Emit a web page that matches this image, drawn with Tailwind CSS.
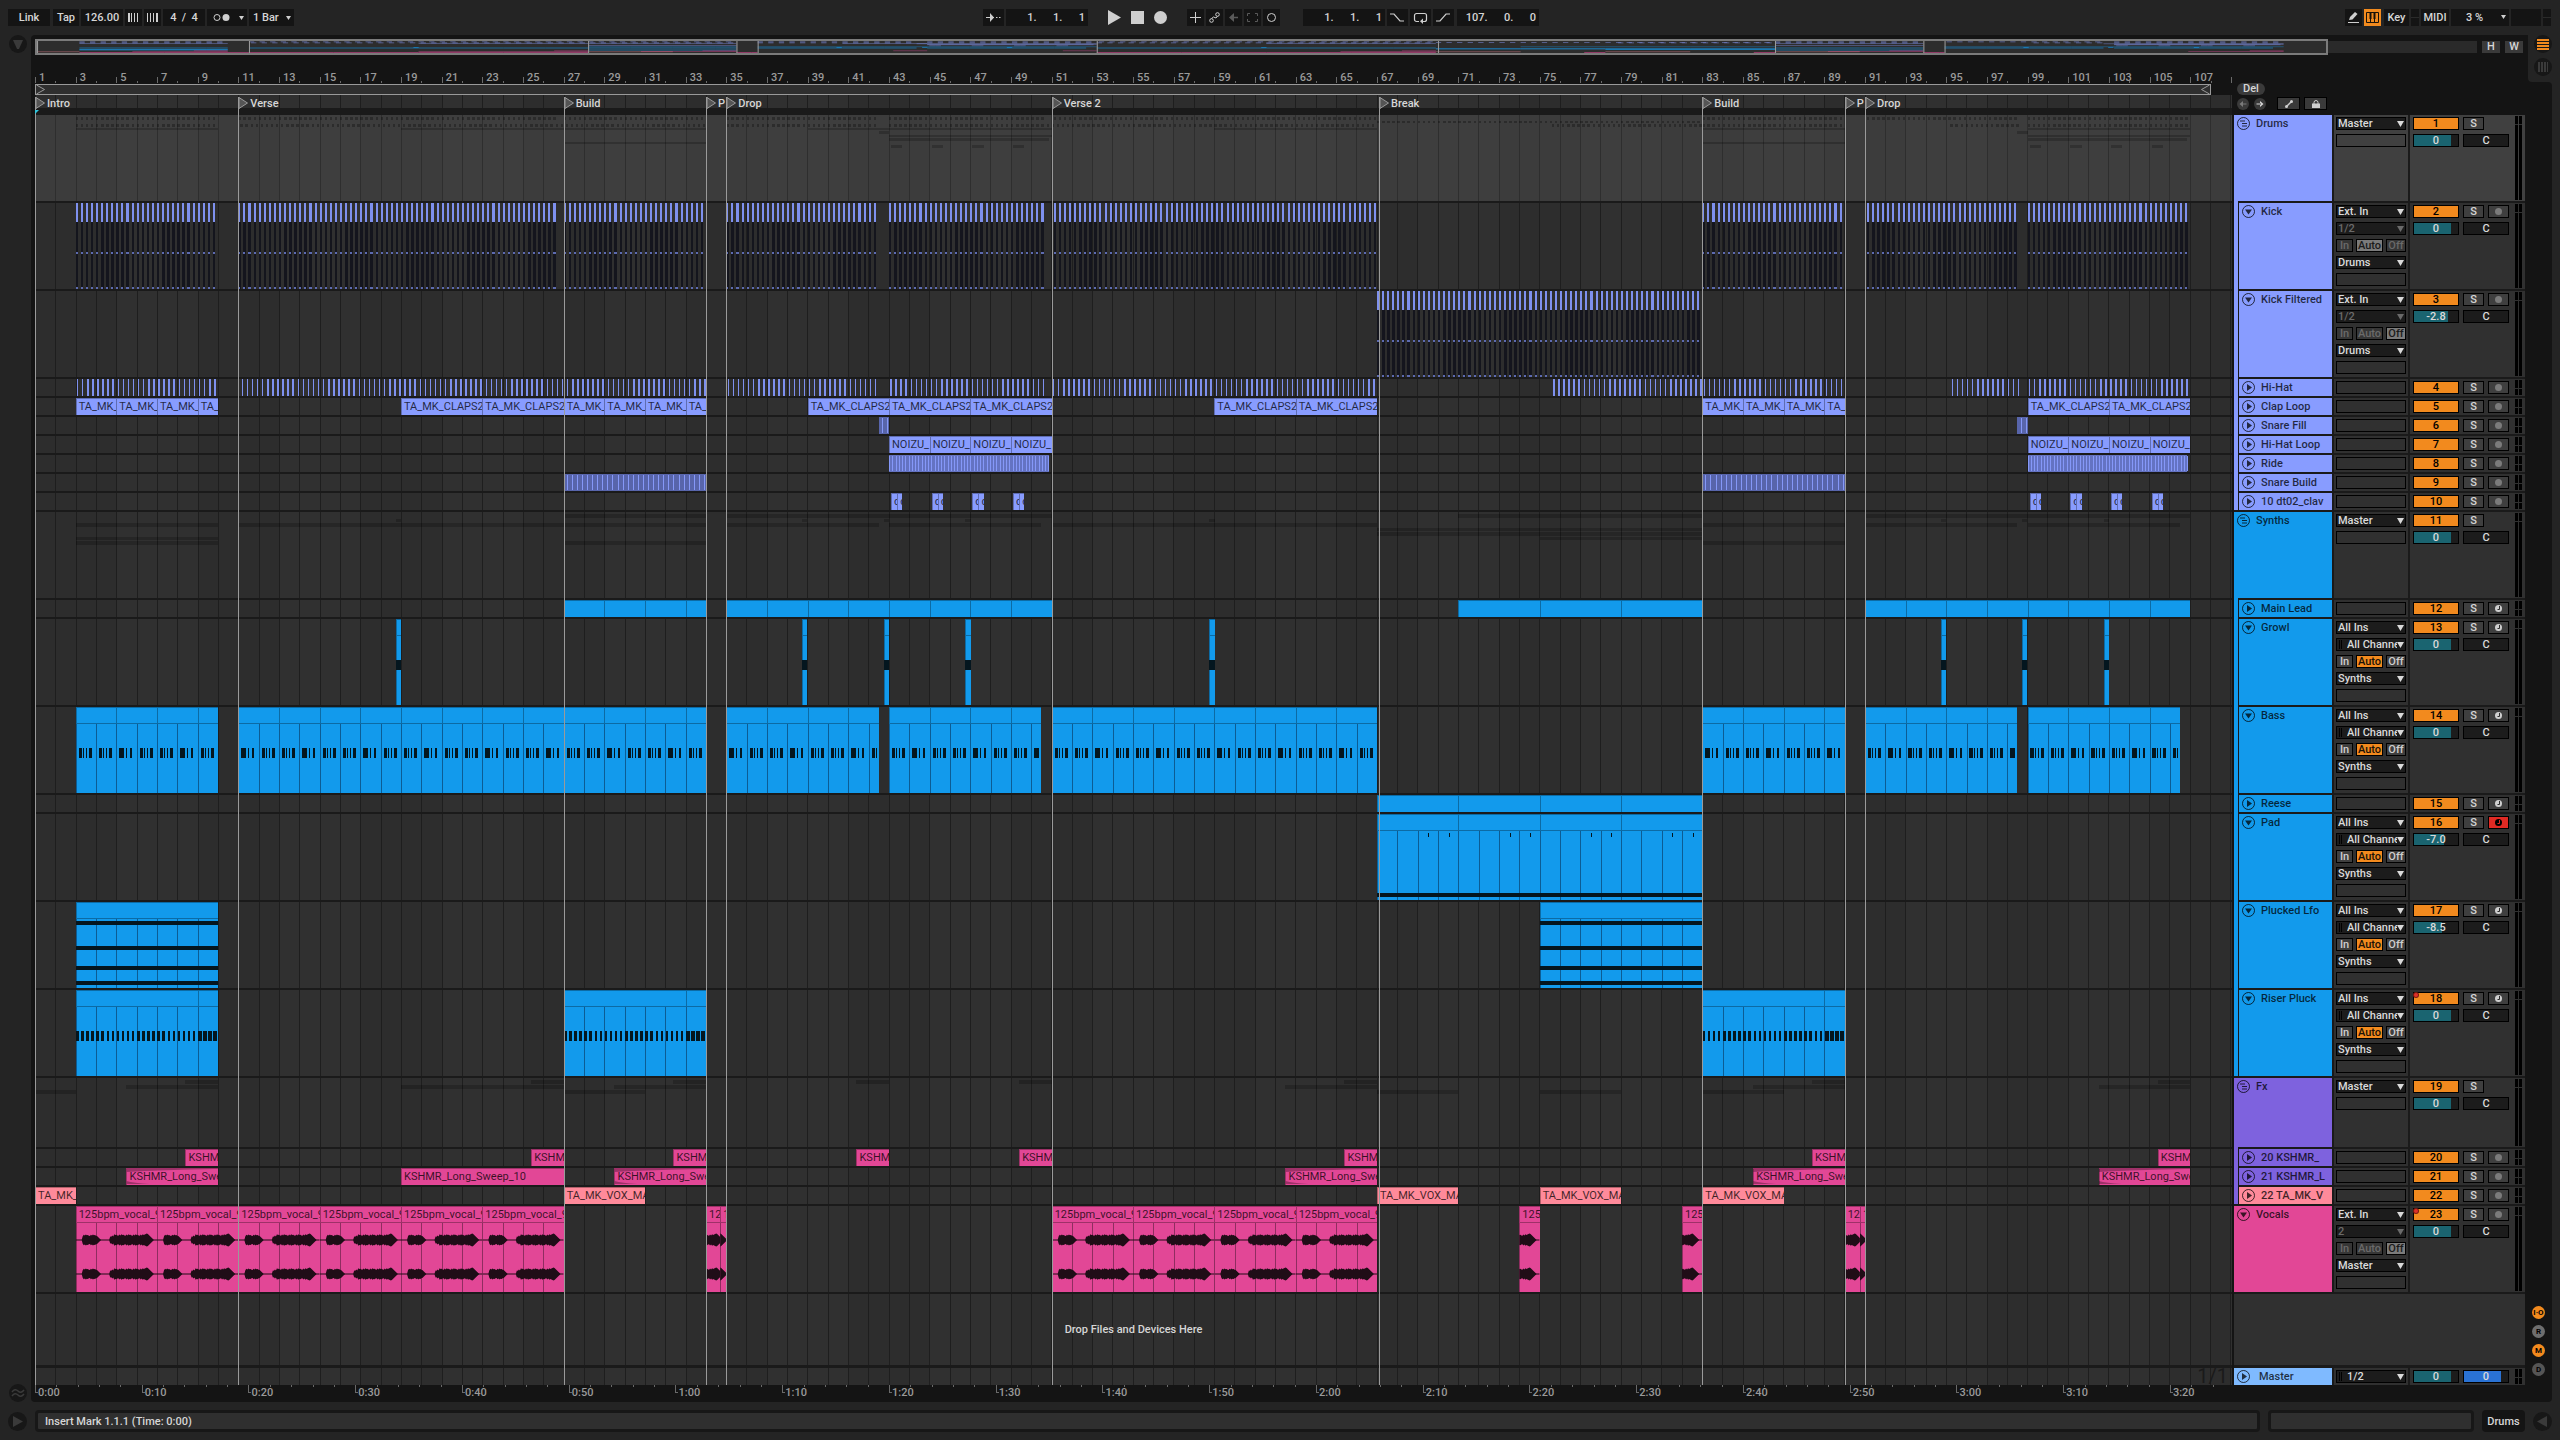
<!DOCTYPE html>
<html lang="en">
<head>
    <meta charset="UTF-8">
    <meta name="viewport" content="width=device-width, initial-scale=1.0">
    <title>Arrangement</title>
    <script src="https://cdn.jsdelivr.net/npm/@tailwindcss/browser@4"></script>
</head>
<body class="flex min-h-screen flex-col bg-[#242424] font-['Roboto','Liberation_Sans',sans-serif] text-[11px] leading-[13px] font-medium text-[#d6d6d6]">

    <!-- Transport -->
    <header class="flex h-[35px] items-center pr-[9px] pl-2">
        <div class="flex w-[38.34%] gap-[2px]">
            <button class="h-[17px] w-[42px] bg-[#141414]">Link</button>
            <button class="ml-px h-[17px] w-[26px] bg-[#141414]">Tap</button>
            <input aria-label="Tempo" value="126.00" class="h-[17px] w-[42px] bg-[#141414] text-center">
            <button aria-label="Nudge down" class="flex h-[17px] w-[17px] items-center justify-center bg-[#141414]">
                <svg width="13" height="9" fill="#cfcfcf" shape-rendering="crispEdges"><path d="M1 0h2v9H1zM4 0h1v9H4zM7 0h1v9H7zM10 0h1v9h-1z"/></svg>
            </button>
            <button aria-label="Nudge up" class="flex h-[17px] w-[17px] items-center justify-center bg-[#141414]">
                <svg width="13" height="9" fill="#cfcfcf" shape-rendering="crispEdges"><path d="M1 0h1v9H1zM4 0h1v9H4zM7 0h1v9H7zM10 0h2v9h-2z"/></svg>
            </button>
            <input aria-label="Time signature" value="4  /  4" class="h-[17px] w-[42px] bg-[#141414] text-center">
            <button aria-label="Metronome" class="flex h-[17px] w-[40px] items-center justify-between bg-[#141414] pr-[3px] pl-[6px]">
                <svg width="18" height="9"><circle cx="4" cy="4.5" r="3" fill="none" stroke="#cfcfcf"/><circle cx="13" cy="4.5" r="3.5" fill="#cfcfcf"/></svg>
                <svg width="5" height="4" fill="#cfcfcf"><path d="M0 0h5L2.5 4z"/></svg>
            </button>
            <div class="relative h-[17px] w-[45px] bg-[#141414]">
                <select aria-label="Quantization" class="h-full w-full appearance-none pl-1"><option>1 Bar</option></select>
                <svg class="pointer-events-none absolute top-[7px] right-[3px]" width="5" height="4" fill="#cfcfcf"><path d="M0 0h5L2.5 4z"/></svg>
            </div>
        </div>
        <div class="flex flex-1 gap-[2px]">
            <button aria-label="Follow" class="flex h-[17px] w-[21px] items-center justify-center bg-[#141414]">
                <svg width="15" height="9"><path d="M0 4.5h8M10 4.5h1.5M13 4.5h1.5" stroke="#cfcfcf"/><path d="M4 0l4 4.5L4 9z" fill="#cfcfcf"/></svg>
            </button>
            <input aria-label="Position" value="1.      1.      1" class="mr-[16px] h-[17px] w-[82px] bg-[#141414] pr-[3px] text-right">
            <button aria-label="Play" class="h-[17px] w-[17px]"><svg width="17" height="17" fill="#cfcfcf"><path d="M2 1l13 7.5L2 16z"/></svg></button>
            <button aria-label="Stop" class="ml-1 h-[17px] w-[17px]"><svg width="17" height="17" fill="#cfcfcf"><path d="M2 2h13v13H2z"/></svg></button>
            <button aria-label="Record" class="ml-1 h-[17px] w-[17px]"><svg width="17" height="17" fill="#cfcfcf"><circle cx="8.5" cy="8.5" r="6.5"/></svg></button>
            <button aria-label="Overdub" class="ml-[16px] flex h-[17px] w-[17px] items-center justify-center bg-[#141414]"><svg width="11" height="11" stroke="#cfcfcf" fill="none"><path d="M5.5 0v11M0 5.5h11"/></svg></button>
            <button aria-label="Automation arm" class="flex h-[17px] w-[17px] items-center justify-center bg-[#141414]"><svg width="11" height="11" stroke="#cfcfcf" fill="none"><circle cx="2.5" cy="8.5" r="1.8"/><circle cx="8.5" cy="2.5" r="1.8"/><path d="M2.500 6.5L4.5 5l2.5 1 1.5-1.8"/></svg></button>
            <button aria-label="Re-enable automation" class="flex h-[17px] w-[17px] items-center justify-center bg-[#141414]"><svg width="11" height="9"><path d="M10 4.5H3" stroke="#5a5a5a" stroke-width="1.5"/><path d="M6 0v9L1 4.5z" fill="#5a5a5a"/></svg></button>
            <button aria-label="Capture MIDI" class="flex h-[17px] w-[17px] items-center justify-center bg-[#141414]"><svg width="11" height="9" stroke="#5a5a5a" fill="none"><path d="M.5 3V.5H3M8 .5h2.5V3M10.5 6v2.5H8M3 8.5H.5V6"/></svg></button>
            <button aria-label="Session record" class="flex h-[17px] w-[17px] items-center justify-center bg-[#141414]"><svg width="11" height="11" stroke="#cfcfcf" fill="none"><circle cx="5.5" cy="5.5" r="4"/></svg></button>
            <input aria-label="Loop start" value="1.      1.      1" class="ml-[21px] h-[17px] w-[82px] bg-[#141414] pr-[3px] text-right">
            <button aria-label="Punch in" class="flex h-[17px] w-[21px] items-center justify-center bg-[#141414]"><svg width="15" height="9" stroke="#cfcfcf" fill="none" stroke-width="1.2"><path d="M0 1h4l6 7h4"/></svg></button>
            <button aria-label="Loop" class="flex h-[17px] w-[21px] items-center justify-center bg-[#141414]"><svg width="15" height="12"><path d="M6 9.5H3.5a2 2 0 0 1-2-2v-4a2 2 0 0 1 2-2h8a2 2 0 0 1 2 2v4a2 2 0 0 1-2 2H9" stroke="#cfcfcf" fill="none" stroke-width="1.2"/><path d="M10 6.5V12L7 9.3z" fill="#cfcfcf"/></svg></button>
            <button aria-label="Punch out" class="flex h-[17px] w-[21px] items-center justify-center bg-[#141414]"><svg width="15" height="9" stroke="#cfcfcf" fill="none" stroke-width="1.2"><path d="M0 8h4l6-7h4"/></svg></button>
            <input aria-label="Loop length" value="107.      0.      0" class="ml-px h-[17px] w-[82px] bg-[#141414] pr-[3px] text-right">
        </div>
        <div class="flex gap-[2px]">
            <button aria-label="Draw mode" class="flex h-[17px] w-[17px] items-center justify-center bg-[#141414]"><svg width="13" height="13"><path d="M2 9l1-3 5-5 2.5 2-5 5.5z" fill="#cfcfcf"/><path d="M1 11.5h11" stroke="#cfcfcf"/></svg></button>
            <button aria-label="Computer keyboard" class="flex h-[17px] w-[17px] items-center justify-center bg-[#f28a1e]"><svg width="13" height="11"><path d="M.5.5h12v10H.5zM4.5 5v5.5M8.5 5v5.5" fill="none" stroke="#1a1208"/><path d="M3.5 0h2v7h-2zM7.5 0h2v7h-2z" fill="#1a1208"/></svg></button>
            <button class="ml-px h-[17px] w-[25px] bg-[#141414]">Key</button>
            <div class="flex h-[17px] w-2 items-center bg-[#141414]"><div class="h-px w-full bg-[#2a2a2a]"></div></div>
            <button class="h-[17px] w-[28px] bg-[#141414]">MIDI</button>
            <div class="relative h-[17px] w-[58px] bg-[#141414]">
                <select aria-label="CPU load" class="h-full w-full appearance-none pl-[15px]"><option>3 %</option></select>
                <svg class="pointer-events-none absolute top-[6px] right-[3px]" width="5" height="4" fill="#cfcfcf"><path d="M0 0h5L2.5 4z"/></svg>
            </div>
            <div class="h-[17px] w-[30px] bg-[#141414]"></div>
            <div class="flex h-[17px] w-2 items-center bg-[#141414]"><div class="h-px w-full bg-[#2a2a2a]"></div></div>
        </div>
    </header>

    <main class="flex flex-1">
        <!-- Left rail -->
        <div class="flex w-[31px] flex-col items-center justify-between pr-[3px] pl-2">
            <button aria-label="Browser"><svg width="18" height="18"><circle cx="9" cy="9" r="9" fill="#171717"/><path d="M4 5h10l-4 9H8z" fill="#3a3a3a"/></svg></button>
            <button aria-label="Grooves"><svg width="18" height="18" fill="none" stroke="#3a3a3a" stroke-width="1.5"><circle cx="9" cy="9" r="9" fill="#171717" stroke="none"/><path d="M3 8q3-4 6-1t6-1M3 12q3-4 6-1t6-1"/></svg></button>
        </div>

        <!-- Arrangement -->
        <section class="flex min-w-0 flex-1 flex-col rounded-l bg-[#141414] pl-1">
            <div class="flex h-5 items-center gap-[5px] pr-[5px]">
                <div class="mt-1 flex h-4 flex-1 items-center">
                    <div class="h-4 w-[93.9%] border-2 border-[#7b7b7b] bg-[#2d2d2d]">
                        <svg id="overview" class="block h-full w-full" viewBox="0 0 108 24" preserveAspectRatio="none"></svg>
                    </div>
                    <div class="h-3 flex-1 bg-[#2a2a2a]"></div>
                </div>
                <button class="mt-1 h-3 w-[18px] bg-[#3a3a3a] leading-3">H</button>
                <button class="mt-1 h-3 w-[18px] bg-[#3a3a3a] leading-3">W</button>
            </div>

            <div class="flex flex-1 gap-[2px] pr-[3px]">
                <div class="flex min-w-0 flex-1 flex-col">
                    <div id="ruler" class="relative h-[29px] text-[#9a9a9a]"></div>
                    <div class="flex h-[11px]">
                        <div class="flex w-[99.05%] items-center justify-between border border-[#9a9a9a] bg-[#2f2f2f]">
                            <svg width="9" height="9" fill="none" stroke="#9a9a9a"><path d="M.5 0l8 4.5-8 4.5"/></svg>
                            <svg width="9" height="9" fill="none" stroke="#9a9a9a"><path d="M8.5 0l-8 4.5 8 4.5"/></svg>
                        </div>
                    </div>
                    <div class="relative flex flex-1 flex-col">
                        <div id="grid" class="absolute inset-0 flex overflow-hidden"></div>
                        <div class="relative h-[13px]"></div>
                        <div class="relative h-[7px] bg-[#1a1a1a]"></div>
                        <div id="lanes" class="relative"></div>
                        <div class="relative flex flex-1 items-center justify-center border-b-3 border-[#1a1a1a]">Drop Files and Devices Here</div>
                        <div class="relative h-[17px] pr-1 text-right text-[20px] leading-[17px] font-normal text-[#1a1a1a]">1/1</div>
                        <div id="locators" class="pointer-events-none absolute inset-0"></div>
                    </div>
                    <div id="times" class="relative h-[17px] overflow-hidden text-[#9a9a9a]"></div>
                </div>

                <!-- Track headers -->
                <div class="flex w-[291px] flex-col bg-[#1a1a1a]">
                    <div class="flex h-[60px] flex-col justify-end gap-[2px] bg-[#141414] pb-[5px] pl-[3px]">
                        <button class="h-[12px] w-[28px] rounded-full bg-[#3a3a3a] leading-3">Del</button>
                        <div class="flex h-[13px] items-center">
                            <button aria-label="Previous locator"><svg width="12" height="12"><circle cx="6" cy="6" r="6" fill="#3a3a3a"/><path d="M6 3v6L2.5 6zM5 5.5h4.5v1H5z" fill="#7a7a7a"/></svg></button>
                            <button aria-label="Next locator" class="ml-[5px]"><svg width="12" height="12"><circle cx="6" cy="6" r="6" fill="#3a3a3a"/><path d="M6 3v6l3.5-3zM2.500 5.5H7v1H2.5z" fill="#d6d6d6"/></svg></button>
                            <button aria-label="Automation mode" class="ml-[11px] flex h-[13px] w-[23px] items-center justify-center border border-black bg-[#3a3a3a]"><svg width="8" height="8" fill="#cfcfcf"><circle cx="1.5" cy="6.5" r="1.5"/><circle cx="6.5" cy="1.5" r="1.5"/><path d="M1 6L6 1l1 1-5 5z"/></svg></button>
                            <button aria-label="Lock envelopes" class="ml-1 flex h-[13px] w-[23px] items-center justify-center border border-black bg-[#3a3a3a]"><svg width="8" height="8"><path d="M0 3.5h8V8H0z" fill="#cfcfcf"/><path d="M2 4V2.5a2 2 0 0 1 4 0V4" fill="none" stroke="#cfcfcf"/></svg></button>
                        </div>
                    </div>
                    <div id="headers"></div>
                    <div class="mb-[3px] flex-1 bg-[#303030]"></div>
                    <div id="master"></div>
                    <div class="h-[17px] bg-[#141414]"></div>
                </div>
            </div>
        </section>

        <!-- Right rail -->
        <div class="flex w-8 flex-col bg-[#141414]">
            <div class="flex h-[47px] flex-col gap-[5px] rounded-bl bg-[#242424] pl-[6px]">
                <button aria-label="Arrangement view" class="h-[18px] w-[18px]"><svg width="18" height="18"><circle cx="9" cy="9" r="9" fill="#171717"/><path d="M3 4h12v2H3zM3 7h12v2H3zM3 10h12v2H3zM3 13h12v2H3z" fill="#f28a1e" shape-rendering="crispEdges"/></svg></button>
                <button aria-label="Session view" class="h-[18px] w-[18px]"><svg width="18" height="18"><circle cx="9" cy="9" r="9" fill="#171717"/><path d="M4 4h2v10H4zM7 4h2v10H7zM10 4h2v10h-2zM13 4h1v10h-1z" fill="#3a3a3a"/></svg></button>
            </div>
            <div class="flex flex-1 bg-[#242424]">
                <div class="flex w-6 flex-col justify-end gap-[6px] rounded-r bg-[#141414] pb-[26px] pl-1 text-[8px] leading-[13px] font-bold text-black">
                    <button class="h-[13px] w-[13px] rounded-full bg-[#f28a1e]">I·O</button>
                    <button class="h-[13px] w-[13px] rounded-full bg-[#6e6e6e]">R</button>
                    <button class="h-[13px] w-[13px] rounded-full bg-[#f28a1e]">M</button>
                    <button class="h-[13px] w-[13px] rounded-full bg-[#555]">D</button>
                </div>
            </div>
        </div>
    </main>

    <!-- Status bar -->
    <footer class="flex h-[38px] items-center gap-2 pr-2 pl-2">
        <button aria-label="Info view"><svg width="19" height="19"><circle cx="9.5" cy="9.5" r="9.5" fill="#171717"/><path d="M5 4l10 5.5L5 15z" fill="#3a3a3a"/></svg></button>
        <div class="flex h-[22px] flex-1 items-center rounded-sm border-3 border-[#171717] bg-[#2f2f2f] pl-[7px]">Insert Mark 1.1.1 (Time: 0:00)</div>
        <div class="h-[22px] w-[206px] rounded-sm border-3 border-[#171717] bg-[#2f2f2f]"></div>
        <button class="h-[22px] w-[43px] rounded-sm bg-[#141414]">Drums</button>
        <button aria-label="Detail view"><svg width="19" height="19"><circle cx="9.5" cy="9.5" r="9.5" fill="#171717"/><path d="M14 4L4 9.5 14 15z" fill="#3a3a3a"/></svg></button>
    </footer>

    <script>
        const BARS = 108.05;
        const pct = n => (n / BARS * 100).toFixed(4) + '%';
        const at = bar => pct(bar - 1);

        // splits a range of bars into clips of equal length
        const seg = (from, to, step) => {
            const out = [];
            for (let b = from; b < to; b += step) out.push([b, Math.min(b + step, to)]);
            return out;
        };
        const starts = (list, len) => list.map(b => [b, b + len]);

        const LILAC = '#889cff', BLUE = '#129aec', PURPLE = '#7e62de', PINK = '#e24796', SALMON = '#ff8a9a';
        const KICKS = [[3, 10], [11, 26.75], [27, 34], [35, 42.5], [43, 50.75], [51.1, 67], [83, 90], [91.1, 98.5], [99, 107]];
        const CLAP = 'TA_MK_CLAPS2_';
        const bassClips = [...seg(3, 10, 2), ...seg(11, 34, 2), ...seg(35, 42.5, 2), ...seg(43, 50.5, 2), ...seg(51, 67, 2), ...seg(83, 90, 2), ...seg(91, 98.5, 2), ...seg(99, 106.5, 2)];
        const clav = [43.1, 45.1, 47.1, 49.1, 99.1, 101.1, 103.1, 105.1].flatMap(b => [[b, b + 0.3], [b + 0.3, b + 0.55]]);

        const tracks = [
            { name: 'Drums', size: 'tall', color: LILAC, group: true, out: 'Master', vol: 84 },
            { name: 'Kick', size: 'tall', color: LILAC, kind: 'kick', clips: KICKS, ins: 'Ext. In', ch: '1/2', mon: 'Auto', out: 'Drums', vol: 84 },
            { name: 'Kick Filtered', size: 'tall', color: LILAC, kind: 'kick', clips: [[67, 83]], ins: 'Ext. In', ch: '1/2', mon: 'Off', out: 'Drums', vol: 77, db: '-2.8' },
            { name: 'Hi-Hat', color: LILAC, kind: 'hat', clips: [[3, 10], [11.1, 34], [35, 42.4], [43, 50.8], [51, 67], [75.6, 83], [83, 90], [95.2, 98.6], [99, 107]] },
            { name: 'Clap Loop', color: LILAC, label: CLAP, clips: [...seg(3, 10, 2), ...seg(19, 27, 4), ...seg(27, 34, 2), ...seg(39, 51, 4), ...seg(59, 67, 4), ...seg(83, 90, 2), ...seg(99, 107, 4)] },
            { name: 'Snare Fill', color: LILAC, kind: 'build', clips: [[42.5, 43], [98.5, 99]] },
            { name: 'Hi-Hat Loop', color: LILAC, label: 'NOIZU_', clips: [...seg(43, 51, 2), ...seg(99, 107, 2)] },
            { name: 'Ride', color: LILAC, kind: 'ride', clips: [[43, 50.85], [99, 106.85]] },
            { name: 'Snare Build', color: LILAC, kind: 'build', clips: [[27, 34], [83, 90]] },
            { name: '10 dt02_clav', color: LILAC, label: 'dt', clips: clav, last: true },
            { name: 'Synths', size: 'tall', color: BLUE, group: true, out: 'Master', vol: 84 },
            { name: 'Main Lead', color: BLUE, midi: true, clips: [...seg(27, 34, 2), ...seg(35, 51, 2), ...seg(71, 83, 4), ...seg(91, 107, 2)] },
            { name: 'Growl', size: 'tall', color: BLUE, midi: true, kind: 'growl', clips: starts([18.76, 38.72, 42.76, 46.76, 58.76, 94.72, 98.72, 102.76], 0.25), ins: 'All Ins', ch: 'All Channels', mon: 'Auto', out: 'Synths', vol: 84 },
            { name: 'Bass', size: 'tall', color: BLUE, midi: true, kind: 'bass', clips: bassClips, ins: 'All Ins', ch: 'All Channels', mon: 'Auto', out: 'Synths', vol: 84 },
            { name: 'Reese', color: BLUE, midi: true, clips: seg(67, 83, 4) },
            { name: 'Pad', size: 'tall', color: BLUE, midi: true, armed: true, kind: 'pad', clips: seg(67, 83, 4), ins: 'All Ins', ch: 'All Channels', mon: 'Auto', out: 'Synths', vol: 68, db: '-7.0' },
            { name: 'Plucked Lfo', size: 'tall', color: BLUE, midi: true, kind: 'pluck', clips: [[3, 10], [75, 83]], ins: 'All Ins', ch: 'All Channels', mon: 'Auto', out: 'Synths', vol: 64, db: '-8.5' },
            { name: 'Riser Pluck', size: 'tall', color: BLUE, midi: true, kind: 'riser', clips: [[3, 9], [9, 10], [27, 33], [33, 34], [83, 89], [89, 90]], ins: 'All Ins', ch: 'All Channels', mon: 'Auto', out: 'Synths', vol: 84, auto: true, last: true },
            { name: 'Fx', size: 'mid', color: PURPLE, group: true, out: 'Master', vol: 84 },
            { name: '20 KSHMR_', color: PURPLE, clip: PINK, label: 'KSHMR', clips: starts([8.4, 25.4, 32.4, 41.4, 49.4, 65.4, 88.4, 105.4], 1.6) },
            { name: '21 KSHMR_L', color: PURPLE, clip: PINK, label: 'KSHMR_Long_Sweep_10', kind: 'fade', clips: [[5.5, 10], [19, 27], [29.5, 34], [62.5, 67], [85.5, 90], [102.5, 107]] },
            { name: '22 TA_MK_V', color: SALMON, strip: PURPLE, label: 'TA_MK_VOX_MAD', clips: [[1, 3], ...starts([27, 67, 75, 83], 4)], last: true },
            { name: 'Vocals', size: 'tall', color: PINK, root: true, kind: 'wave', label: '125bpm_vocal_9', clips: [...seg(3, 27, 4), [34, 34.7], [34.7, 35], ...seg(51, 67, 4), [74, 75], [82, 83], [90, 90.75], [90.75, 91]], ins: 'Ext. In', ch: '2', mon: 'Off', out: 'Master', vol: 84, auto: true }
        ];

        const HEIGHTS = { tall: 'h-[88px]', mid: 'h-[71px]', small: 'h-[19px]' };
        const rect = (b, w, y, h, fill) => `<rect x="${at(b)}" width="${pct(w)}" y="${y}" height="${h}" fill="${fill}"/>`;
        const line = (b, y, h, fill, w = 1) => `<rect x="${at(b)}" width="${w}" y="${y}" height="${h}" fill="${fill}"/>`;
        const every = (a, b, step, fn) => {
            let s = '';
            for (let x = a; x < b - 0.01; x += step) s += fn(x);
            return s;
        };

        // vocal waveform, one four-bar phrase is 80 units long
        function wavePath() {
            const amp = x => {
                const j = [0, 1.3, 0.4, 1.6, 0.8, 1.1, 0.2][x % 7];
                if (x >= 7 && x < 21) return 4 + j;
                if (x >= 21 && x < 25) return 4 - (x - 21);
                if (x >= 34 && x < 67) return (x < 38 ? 3.2 : 4.2) + j;
                if (x >= 67 && x < 72) return 6.5 - Math.abs(x - 70) * 0.5;
                if (x >= 72 && x < 77) return 5 - (x - 72);
                return 0.6;
            };
            let top = '', bottom = '';
            for (let x = 0; x <= 80; x++) {
                top += `L${x} ${7 - amp(x)}`;
                bottom = `L${x} ${7 + amp(x)}` + bottom;
            }
            return 'M0 7' + top + bottom + 'Z';
        }
        const WAVE = wavePath();
        const NOTE = '#04161f';

        function drawNotes(t) {
            let s = '';
            t.clips.forEach(([a, b]) => {
                if (t.kind === 'kick') {
                    s += every(a, b, 0.25, x => rect(x, 0.1, 0, 19, '#7e90ee') + rect(x, 0.12, 19, 67, '#14151d') + rect(x, 0.1, 49, 2, '#5d6bb0') + rect(x, 0.1, 84, 2, '#5d6bb0'));
                } else if (t.kind === 'hat') {
                    s += every(a + 0.06, b, 0.25, x => rect(x, 0.075, 0, 17, '#7e90ee'));
                } else if (t.kind === 'ride') {
                    s += rect(a, b - a, 0, 17, '#6473c2') + every(a, b, 0.16, x => line(x, 1, 15, '#8598f8'));
                } else if (t.kind === 'build') {
                    s += rect(a, b - a, 0, 17, '#5865ab') + every(a + 0.15, b, 0.25, x => line(x, 1, 15, '#8598f8'));
                } else if (t.kind === 'growl') {
                    s += rect(a, b - a, 41, 10, NOTE);
                } else if (t.kind === 'bass') {
                    s += every(a, b, 1, x => line(x, 17, 69, '#0c5c94') + rect(x + 0.14, 0.17, 41, 10, NOTE) + rect(x + 0.34, 0.06, 41, 10, NOTE) + (x + 0.6 > b ? '' : rect(x + 0.49, 0.05, 41, 10, NOTE) + rect(x + 0.66, 0.13, 41, 10, NOTE)));
                } else if (t.kind === 'pad') {
                    s += every(a, b, 1, x => line(x, 17, 69, '#0c5c94')) + line(a + 2.53, 19, 4, NOTE) + line(a + 3.53, 19, 4, NOTE) + rect(a, b - a, 79, 4, NOTE);
                } else if (t.kind === 'pluck') {
                    s += every(a, b, 1, x => line(x, 17, 69, '#0c5c94')) + [19, 44, 64, 79].map(y => rect(a, b - a, y, 4, NOTE)).join('');
                } else if (t.kind === 'riser') {
                    s += every(a, b, 1, x => line(x, 17, 69, '#0c5c94')) + every(a, b, 0.25, x => rect(x + 0.02, b - a > 1 ? 0.12 : 0.2, 41, 10, NOTE));
                } else if (t.kind === 'fade' && b - a !== 8) {
                    s += `<svg x="${at(a)}" width="${pct(b - a)}" height="17" viewBox="0 0 100 17" preserveAspectRatio="none" shape-rendering="auto"><path d="M0 1H95Q40 2 0 4ZM0 16H25Q8 15 0 13Z" fill="#000" fill-opacity=".3"/></svg>`;
                } else if (t.kind === 'wave') {
                    const w = (b - a) * 20;
                    s += every(a, b, 1, x => line(x, 17, 69, '#8f2d60'));
                    [27, 61].forEach(y => {
                        s += `<svg x="${at(a)}" y="${y}" width="${pct(b - a)}" height="14" viewBox="${w === 80 ? 0 : b - a < 0.5 ? 70 : 60} 0 ${w} 14" preserveAspectRatio="none" shape-rendering="auto"><path d="${WAVE}" fill="#200d17"/></svg>`;
                    });
                }
            });
            return s;
        }

        // group tracks show a dimmed miniature of the tracks they hold
        function drawGroup(i) {
            const kids = [];
            for (let k = i + 1; k < tracks.length && !tracks[k].group && !tracks[k].root; k++) kids.push(tracks[k]);
            const pitch = i === 0 ? 3.5 : i === 10 ? 4.5 : 5;
            return kids.map((t, k) => t.clips.map(([a, b]) => {
                const y = Math.round(2 + k * pitch), h = i === 0 ? 3 - k % 2 : i === 10 ? 4 - k % 2 : 4;
                return t.kind === 'kick' || t.kind === 'hat'
                    ? every(a, b, 0.25, x => rect(x, 0.12, y, h, '#00000048'))
                    : rect(a, b - a, y, h, '#00000034');
            }).join('')).join('');
        }

        const bare = ['kick', 'hat', 'ride', 'build'];
        document.getElementById('lanes').innerHTML = tracks.map((t, i) => {
            const h = HEIGHTS[t.size || 'small'];
            const clips = !t.clips || bare.includes(t.kind) ? '' : t.clips.map(([a, b]) => `
                <div class="absolute inset-y-0 overflow-hidden border-t border-l border-black/30" style="left:${at(a)};width:${pct(b - a)};background:${t.clip || t.color}">
                    <div class="h-4 overflow-hidden pl-[2px] leading-4 font-normal whitespace-nowrap text-black/75 ${t.size ? 'border-b border-black/30' : ''}">${t.label || ''}</div>
                </div>`).join('');
            return `<div class="${h} border-b-2 border-[#1a1a1a]"><div class="relative h-full overflow-hidden ${i === 0 ? 'bg-white/7' : ''}">${clips}
                <svg class="absolute inset-0 h-full w-full" shape-rendering="crispEdges">${t.group ? drawGroup(i) : drawNotes(t)}</svg></div></div>`;
        }).join('');

        // bar grid, shaded in blocks of four bars
        document.getElementById('grid').innerHTML = Array.from({ length: 109 }, (_, i) =>
            `<div class="shrink-0 border-l border-[#1e1e1e] ${Math.floor(i / 4) % 2 ? 'bg-[#303030]' : 'bg-[#2d2d2d]'}" style="width:${pct(1)}"></div>`).join('');

        document.getElementById('ruler').innerHTML = Array.from({ length: 109 }, (_, i) => i % 2
            ? `<div class="absolute bottom-[1px] h-[2px] w-px bg-[#6a6a6a]" style="left:${pct(i)}"></div>`
            : `<div class="absolute bottom-[1px] h-[6px] border-l border-[#6a6a6a]" style="left:${pct(i)}"></div>` +
              (i < 108 ? `<div class="absolute bottom-0 pl-1" style="left:${pct(i)}">${i + 1}</div>` : '')).join('');

        document.getElementById('times').innerHTML = Array.from({ length: 103 }, (_, i) => {
            const left = pct(i * 1.05);
            if (i % 5) return `<div class="absolute top-0 h-[2px] w-px bg-[#6a6a6a]" style="left:${left}"></div>`;
            const s = i * 2;
            return `<div class="absolute top-0 h-2 w-[3px] border-b border-l border-[#6a6a6a]" style="left:${left}"></div>
                <div class="absolute top-[1px] pl-[3px]" style="left:${left}">${Math.floor(s / 60)}:${String(s % 60).padStart(2, '0')}</div>`;
        }).join('');

        const locators = [[1, 'Intro'], [11, 'Verse'], [27, 'Build'], [34, 'P'], [35, 'Drop'], [51, 'Verse 2'], [67.1, 'Break'], [83, 'Build'], [90, 'P'], [91, 'Drop']];
        document.getElementById('locators').innerHTML = locators.map(([b, name]) => `
            <div class="absolute top-[2px] bottom-0 flex border-l border-[#9a9a9a]" style="left:${at(b)}">
                <svg width="9" height="12"><path d="M0 .5L8.500 6 0 11.5z" fill="#555" stroke="#9a9a9a"/></svg>
                <span class="pl-[2px]">${name}</span>
            </div>`).join('') + '<svg class="absolute top-[15px] left-0" width="4" height="4" fill="#2fc4dc"><path d="M0 0h4L0 4z"/></svg>';

        document.getElementById('overview').innerHTML = tracks.map((t, i) => (t.clips || []).map(([a, b]) => {
            const fill = t.clip || t.color;
            return t.kind === 'kick' || t.kind === 'hat'
                ? every(a, b, 0.5, x => `<rect x="${x - 1}" y="${i}" width=".25" height="1.5" fill="${fill}" opacity=".6"/>`)
                : `<rect x="${a - 1}" y="${i}" width="${b - a}" height="${t.size ? 2 : 1.3}" fill="${fill}" opacity=".55"/>`;
        }).join('')).join('') + locators.map(([b]) => `<rect x="${b - 1}" y="0" width=".05" height="24" fill="#9a9a9a"/>`).join('');

        // --- track headers ---
        const icon = {
            group: '<path d="M3 4h5M5 6.500h5M5 9h5" />',
            open: '<path d="M3 4.5h7L6.5 9.5z" fill="currentColor" stroke="none"/>',
            closed: '<path d="M5 3l5 3.5L5 10z" fill="currentColor" stroke="none"/>'
        };
        const foldIcon = k => `<button aria-label="Fold"><svg width="13" height="13" fill="none" stroke="currentColor"><circle cx="6.5" cy="6.5" r="6"/>${icon[k]}</svg></button>`;

        const select = (label, value, dim, indent) => `
            <div class="relative h-[13px] border border-black bg-[#1c1c1c] ${dim ? 'text-[#6a6a6a]' : 'text-[#dadada]'}">
                <select aria-label="${label}" class="block h-[11px] w-full appearance-none overflow-hidden pr-[8px] leading-[11px] ${indent ? 'pl-[10px]' : 'pl-px'}"><option>${value}</option></select>
                <svg class="pointer-events-none absolute top-[3px] right-[1px]" width="7" height="6" fill="currentColor"><path d="M0 0h7L3.5 6z"/></svg>
                ${indent ? '<svg class="absolute top-px left-[2px]" width="4" height="9" fill="#000" shape-rendering="crispEdges"><path d="M0 0h1v9H0zM2 0h1v9H2z"/></svg>' : ''}
            </div>`;
        const blank = '<div class="h-[13px] border border-black"></div>';

        const monitor = t => `<div class="flex gap-[3px]">${['In', 'Auto', 'Off'].map(m => {
            const w = { In: 'w-[17px]', Auto: 'w-[27px]', Off: 'w-[20px]' }[m];
            const on = m === t.mon;
            const look = on ? (t.midi ? 'bg-[#f28a1e] text-[#1a1208]' : 'bg-[#7b7b7b] text-[#1a1a1a]') : (t.midi ? 'bg-[#3f3f3f] text-[#cfcfcf]' : 'bg-[#363636] text-[#6a6a6a]');
            return `<button class="flex h-[13px] ${w} items-center justify-center border border-black leading-[11px] ${look}">${m}</button>`;
        }).join('')}</div>`;

        const io = t => !t.size ? blank
            : t.group ? select('Output', t.out) + blank
            : select('Input', t.ins) + select('Channel', t.ch, !t.midi, t.midi) + monitor(t) + select('Output', t.out) + blank;

        const slider = (label, value, fill, p) => `<input aria-label="${label}" value="${value}" class="h-[13px] w-[46px] border border-black text-center leading-[11px] text-[#dadada]" style="background:linear-gradient(90deg,${fill} ${p}%,#1c1c1c ${p}%)">`;

        const meter = '<div class="flex gap-px py-px"><div class="w-[3px] bg-black pt-2"><div class="h-px bg-[#303030]"></div></div><div class="w-[3px] bg-black pt-2"><div class="h-px bg-[#303030]"></div></div></div>';

        const arm = t => t.group ? '' : `<button aria-label="Arm" class="flex h-[13px] w-[21px] items-center justify-center border border-black ${t.armed ? 'bg-[#e02a24] text-black' : t.midi ? 'bg-[#3f3f3f] text-[#cfcfcf]' : 'bg-[#3f3f3f] text-[#7b7b7b]'}">
            <svg width="7" height="7"><circle cx="3.5" cy="3.5" r="3.5" fill="currentColor"/>${t.midi ? `<path d="M4.5 1v3.5H2.5" fill="none" stroke="${t.armed ? '#e02a24' : '#2a2a2a'}"/>` : ''}</svg></button>`;

        document.getElementById('headers').innerHTML = tracks.map((t, i) => {
            const kind = t.group ? 'group' : t.size ? 'open' : 'closed';
            const child = !t.group && !t.root;
            const bg = i === 0 ? 'bg-[#404040]' : 'bg-[#303030]';
            return `
            <div class="flex ${HEIGHTS[t.size || 'small']} gap-[2px]">
                <div class="flex w-[98px]">
                    <div class="w-1 ${t.last || t.root ? 'mb-[2px]' : ''}" style="background:${t.strip || t.color}"></div>
                    <div class="mb-[2px] flex flex-1 items-start gap-[6px] overflow-hidden pt-[2px] whitespace-nowrap text-black/75 ${child ? 'ml-px pl-[3px]' : '-ml-px'}" style="background:${t.color}">
                        ${foldIcon(kind)}<span>${t.name}</span>
                    </div>
                </div>
                <div class="mb-[2px] flex w-[74px] flex-col gap-1 p-[2px] ${bg}">${io(t)}</div>
                <div class="mb-[2px] flex flex-1 justify-between pr-[3px] pl-[3px] ${bg}">
                    <div class="flex flex-col gap-1 pt-[2px]">
                        <div class="flex gap-1">
                            <button class="relative h-[13px] w-[46px] border border-black bg-[#f28a1e] leading-[11px] text-black">${i + 1}${t.auto ? '<span class="absolute top-0 left-0 h-1 w-1 rounded-full bg-[#e0302a] ring-1 ring-[#7a1a10]"></span>' : ''}</button>
                            <button class="h-[13px] w-[21px] border border-black bg-[#3f3f3f] leading-[11px]">S</button>
                            ${arm(t)}
                        </div>
                        ${t.size ? `<div class="flex gap-1">${slider('Volume', t.db || '0', '#1a6470', t.vol)}${slider('Pan', 'C', '#1c1c1c', 0)}</div>` : ''}
                    </div>
                    ${meter}
                </div>
            </div>`;
        }).join('');

        document.getElementById('master').innerHTML = `
            <div class="flex h-[17px] gap-[2px]">
                <div class="flex w-[98px] items-start gap-[9px] bg-[#7fbaff] pt-[2px] pl-[3px] text-black/75">${foldIcon('closed')}<span>Master</span></div>
                <div class="w-[74px] bg-[#303030] p-[2px]">${select('Cue output', '1/2', false, true)}</div>
                <div class="flex flex-1 justify-between bg-[#303030] pr-[3px] pl-[3px]">
                    <div class="flex gap-1 pt-[2px]">${slider('Volume', '0', '#1a6470', 84)}${slider('Cue volume', '0', '#2a72d4', 84)}</div>
                    ${meter}
                </div>
            </div>`;
    </script>
</body>
</html>
